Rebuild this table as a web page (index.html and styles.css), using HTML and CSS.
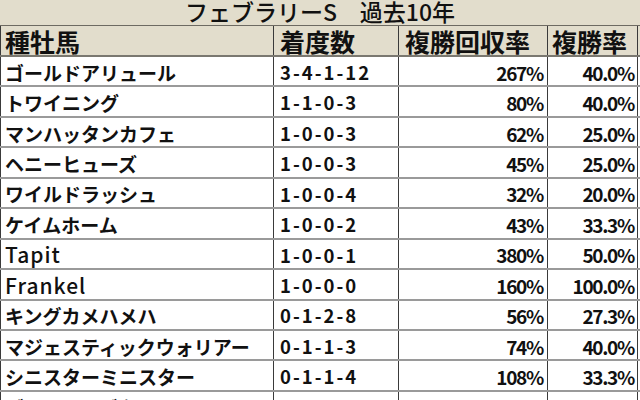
FILE: index.html
```html
<!DOCTYPE html>
<html lang="ja">
<head>
<meta charset="utf-8">
<link rel="stylesheet" href="styles.css">
</head>
<body>
<div class="sheet">
  <div class="title">フェブラリーS　過去10年</div>
  <div class="row head">
    <div class="cell name">種牡馬</div>
    <div class="cell rec">着度数</div>
    <div class="cell ret">複勝回収率</div>
    <div class="cell rate">複勝率</div>
  </div>
  <div class="row"><div class="cell name">ゴールドアリュール</div><div class="cell rec">3-4-1-12</div><div class="cell ret num">267%</div><div class="cell rate num">40.0%</div></div>
  <div class="row"><div class="cell name">トワイニング</div><div class="cell rec">1-1-0-3</div><div class="cell ret num">80%</div><div class="cell rate num">40.0%</div></div>
  <div class="row"><div class="cell name">マンハッタンカフェ</div><div class="cell rec">1-0-0-3</div><div class="cell ret num">62%</div><div class="cell rate num">25.0%</div></div>
  <div class="row"><div class="cell name">ヘニーヒューズ</div><div class="cell rec">1-0-0-3</div><div class="cell ret num">45%</div><div class="cell rate num">25.0%</div></div>
  <div class="row"><div class="cell name">ワイルドラッシュ</div><div class="cell rec">1-0-0-4</div><div class="cell ret num">32%</div><div class="cell rate num">20.0%</div></div>
  <div class="row"><div class="cell name">ケイムホーム</div><div class="cell rec">1-0-0-2</div><div class="cell ret num">43%</div><div class="cell rate num">33.3%</div></div>
  <div class="row"><div class="cell name latin">Tapit</div><div class="cell rec">1-0-0-1</div><div class="cell ret num">380%</div><div class="cell rate num">50.0%</div></div>
  <div class="row"><div class="cell name latin">Frankel</div><div class="cell rec">1-0-0-0</div><div class="cell ret num">160%</div><div class="cell rate num">100.0%</div></div>
  <div class="row"><div class="cell name">キングカメハメハ</div><div class="cell rec">0-1-2-8</div><div class="cell ret num">56%</div><div class="cell rate num">27.3%</div></div>
  <div class="row"><div class="cell name">マジェスティックウォリアー</div><div class="cell rec">0-1-1-3</div><div class="cell ret num">74%</div><div class="cell rate num">40.0%</div></div>
  <div class="row"><div class="cell name">シニスターミニスター</div><div class="cell rec">0-1-1-4</div><div class="cell ret num">108%</div><div class="cell rate num">33.3%</div></div>
  <div class="row"><div class="cell name">ブライアンズタイム</div><div class="cell rec">0-1-0-2</div><div class="cell ret num">95%</div><div class="cell rate num">33.3%</div></div>
</div>
</body>
</html>
```
FILE: styles.css
```css
html, body {
  margin: 0;
  padding: 0;
  background: #ffffff;
}
.sheet {
  width: 640px;
  height: 400px;
  overflow: hidden;
  font-family: "Noto Sans CJK JP", "Noto Sans", sans-serif;
  color: #111;
}
.title {
  height: 26px;
  box-sizing: border-box;
  background: #e2ddcc;
  border-bottom: 1px solid #6d6a62;
  text-align: center;
  font-size: 23px;
  line-height: 23px;
  font-weight: 500;
  white-space: nowrap;
}
.row {
  display: grid;
  grid-template-columns: 274px 125px 149px 90px;
  height: 30.45px;
  box-sizing: border-box;
  border-bottom: 2px solid #9a9a9a;
  font-size: 19px;
  font-weight: 700;
  line-height: 1;
}
.row.head {
  background: #e2ddcc;
  font-size: 25px;
  font-weight: 700;
  height: 31px;
  border-bottom: 2px solid #7a7870;
}
.cell {
  box-sizing: border-box;
  border-right: 1px solid #3a3a3a;
  display: flex;
  align-items: center;
  white-space: nowrap;
  padding-top: 2px;
}
.name {
  border-left: 1px solid #3a3a3a;
  padding-left: 4px;
}
.latin {
  font-weight: 500;
  font-size: 21px;
  letter-spacing: 1px;
}
.rec {
  padding-left: 6px;
}
.row:not(.head) .rec {
  letter-spacing: 2px;
  font-size: 18.5px;
}
.ret {
  padding-left: 6px;
}
.rate {
  padding-left: 4px;
}
.num {
  justify-content: flex-end;
  padding-right: 4px;
  letter-spacing: -1.3px;
  font-size: 19px;
}
.rate.num {
  padding-right: 3px;
}
```
